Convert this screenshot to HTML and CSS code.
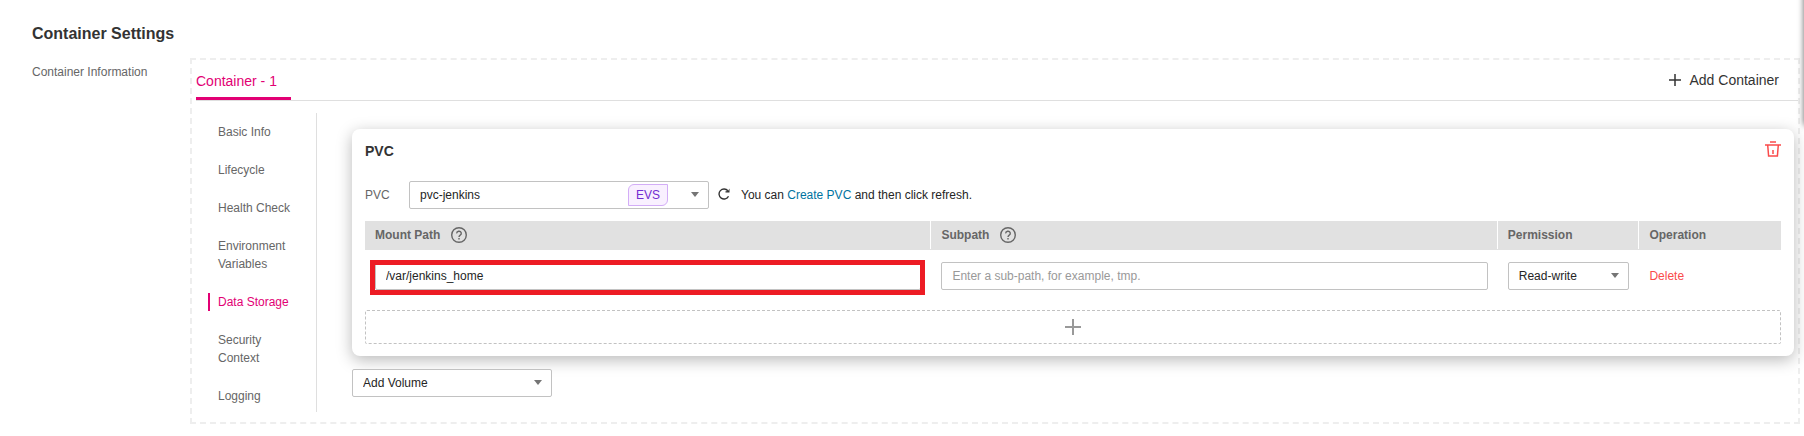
FILE: index.html
```html
<!DOCTYPE html>
<html lang="en">
<head>
<meta charset="utf-8">
<title>Container Settings</title>
<link rel="stylesheet" href="styles.css">
</head>
<body>
<main class="page">
  <h1 class="page-title">Container Settings</h1>
  <div class="section">
    <div class="section-label">Container Information</div>
    <section class="container-box">
      <header class="tabs">
        <button class="tab" type="button">Container - 1</button>
        <button class="add-container" type="button">
          <svg class="icon-plus" viewBox="0 0 12 12" width="12" height="12"><path d="M6 0v12M0 6h12"/></svg>
          Add Container
        </button>
      </header>
      <div class="body">
        <nav class="side-nav">
          <a class="nav-item" href="#basic">Basic Info</a>
          <a class="nav-item" href="#lifecycle">Lifecycle</a>
          <a class="nav-item" href="#health">Health Check</a>
          <a class="nav-item" href="#env">Environment Variables</a>
          <a class="nav-item nav-item-active" href="#storage">Data Storage</a>
          <a class="nav-item" href="#security">Security Context</a>
          <a class="nav-item" href="#logging">Logging</a>
        </nav>
        <div class="content">
          <article class="card">
            <div class="card-head">
              <h2 class="card-title">PVC</h2>
              <button class="trash" type="button" aria-label="Delete volume">
                <svg viewBox="0 0 16 16" width="16" height="16"><path d="M5 1h6M0 4h16"/><path d="M2.700 4l.9 11h8.800l.9-11M8 9v4"/></svg>
              </button>
            </div>
            <div class="pvc-row">
              <label class="pvc-label" for="pvc">PVC</label>
              <div class="select-wrap pvc-select">
                <select class="select" id="pvc"><option>pvc-jenkins</option></select>
                <span class="badge">EVS</span>
                <span class="caret"></span>
              </div>
              <button class="refresh" type="button" aria-label="Refresh">
                <svg viewBox="0 0 12 12" width="12" height="12"><path d="M10.500 8.300A5 5 0 1 1 9.900 2.800"/><path class="solid" d="M11.500 .5v4H7.500V3.300L10 3z"/></svg>
              </button>
              <p class="hint">You can <a class="link" href="#create">Create PVC</a> and then click refresh.</p>
            </div>
            <table class="mounts">
              <thead>
                <tr>
                  <th class="col-wide"><span class="th-inner"><span id="mount-label">Mount Path</span>
                    <svg class="help" viewBox="0 0 16 16" width="16" height="16"><circle cx="8" cy="8" r="7.300"/><path d="M5.700 6.400a2.300 2.100 0 1 1 3.500 1.700C8.300 8.700 8 9 8 10M8 11v1.500"/></svg></span></th>
                  <th class="col-wide"><span class="th-inner"><span id="subpath-label">Subpath</span>
                    <svg class="help" viewBox="0 0 16 16" width="16" height="16"><circle cx="8" cy="8" r="7.300"/><path d="M5.700 6.400a2.300 2.100 0 1 1 3.500 1.700C8.300 8.700 8 9 8 10M8 11v1.500"/></svg></span></th>
                  <th class="col-narrow"><span class="th-inner" id="permission-label">Permission</span></th>
                  <th class="col-narrow"><span class="th-inner">Operation</span></th>
                </tr>
              </thead>
              <tbody>
                <tr>
                  <td><div class="marked"><input class="input" type="text" value="/var/jenkins_home" aria-labelledby="mount-label"></div></td>
                  <td><input class="input" type="text" placeholder="Enter a sub-path, for example, tmp." aria-labelledby="subpath-label"></td>
                  <td><div class="select-wrap"><select class="select" aria-labelledby="permission-label"><option>Read-write</option></select><span class="caret"></span></div></td>
                  <td><button class="delete" type="button">Delete</button></td>
                </tr>
              </tbody>
            </table>
            <button class="add-row" type="button" aria-label="Add mount path">
              <svg viewBox="0 0 16 16" width="16" height="16"><path d="M8 0v16M0 8h16"/></svg>
            </button>
          </article>
          <div class="select-wrap add-volume">
            <select class="select" aria-label="Add Volume"><option>Add Volume</option></select>
            <span class="caret"></span>
          </div>
        </div>
      </div>
    </section>
  </div>
  <div class="edge-clip"><div class="edge-panel"></div></div>
</main>
</body>
</html>
```
FILE: styles.css
```css
* { box-sizing: border-box; }
body {
  margin: 0;
  background: #fff;
  color: #252525;
  font: 12px/18px "Liberation Sans", Arial, sans-serif;
}
button, input, select { font: inherit; color: inherit; margin: 0; }
button { border: 0; padding: 0; background: none; cursor: pointer; }
a { text-decoration: none; }
svg { display: block; fill: none; stroke: currentColor; }

.page { position: relative; padding: 23px 4px 12px 32px; }
.page-title { margin: 0 0 13px; font-size: 16px; line-height: 22px; font-weight: 700; color: #333; }
.section { display: flex; }
.section-label { flex: 0 0 158px; padding-top: 5px; color: #666; }
.container-box { flex: 1; min-width: 0; border: 2px dashed #eee; padding: 0 0 10px 4px; }

.tabs {
  display: flex;
  justify-content: space-between;
  height: 41px;
  border-bottom: 1px solid #dfdfdf;
}
.tab {
  height: 40px;
  padding: 4px 14px 0 0;
  border-bottom: 3px solid #e20074;
  color: #e20074;
  font-size: 14px;
}
.add-container { display: flex; align-items: center; gap: 8px; padding-right: 19px; color: #333; font-size: 14px; }
.icon-plus { stroke-width: 1.5; }

.body { display: flex; padding-top: 12px; }
.side-nav {
  display: flex;
  flex-direction: column;
  gap: 20px;
  flex: 0 0 121px;
  padding: 10px 16px 7px 12px;
  border-right: 1px solid #dfdfdf;
}
.nav-item { padding-left: 8px; border-left: 2px solid transparent; color: #666; }
.nav-item-active { border-color: #e20074; color: #e20074; }

.content { flex: 1; min-width: 0; padding: 16px 4px 0 35px; }
.card {
  padding: 12px 13px;
  border-radius: 8px;
  background: #fff;
  box-shadow: 0 4px 16px rgba(0, 0, 0, .28);
}
.card-head { display: flex; justify-content: space-between; }
.card-title { margin: 0; font-size: 14px; line-height: 20px; color: #333; }
.trash { height: 16px; color: #fa4b4b; }
.trash svg { stroke-width: 1.5; }
.pvc-row { display: flex; align-items: center; margin-top: 20px; }
.pvc-label { width: 44px; color: #666; }
.select-wrap { position: relative; }
.pvc-select { width: 300px; }
.select, .input {
  display: block;
  width: 100%;
  height: 28px;
  padding: 0 10px;
  border: 1px solid #c2c2c2;
  border-radius: 2px;
  background: #fff;
  appearance: none;
  outline: 0;
}
.input::placeholder { color: #999; opacity: 1; }
.caret {
  position: absolute;
  top: 11px;
  right: 10px;
  border: 4px solid transparent;
  border-top: 5px solid #757575;
  border-bottom: 0;
  pointer-events: none;
}
.badge {
  position: absolute;
  top: 3px;
  right: 41px;
  padding: 1px 7px;
  border: 1px solid #d3adf7;
  border-radius: 6px 0;
  background: #f9f0ff;
  color: #722ed1;
  line-height: 18px;
}
.refresh { margin: 0 11px 2px 9px; color: #333; }
.refresh svg { stroke-width: 1.4; }
.refresh .solid { fill: currentColor; stroke: none; }
.hint { margin: 0; }
.link { color: #00739f; }

.mounts { width: 100%; margin-top: 12px; border-collapse: collapse; table-layout: fixed; }
.mounts th { padding: 0; background: #e1e1e1; color: #666; text-align: left; }
.col-wide { width: 40%; }
.col-narrow { width: 10%; }
.th-inner { display: flex; align-items: center; gap: 11px; height: 28px; margin-bottom: 1px; padding-left: 10px; }
.th-inner .help { stroke-width: 1.4; }
.mounts th:not(:last-child) .th-inner { border-right: 1px solid #fff; }
.mounts td { padding: 12px 10px 20px; }
.marked { position: relative; }
.marked::after {
  content: "";
  position: absolute;
  inset: -2px -4px -5px -5px;
  border: 5px solid #ed1c24;
  pointer-events: none;
}
.delete { display: block; color: #fa4b4b; }
.add-row {
  display: flex;
  align-items: center;
  justify-content: center;
  width: 100%;
  height: 34px;
  border: 1px dashed #c2c2c2;
  border-radius: 2px;
  color: #999;
}
.add-row svg { stroke-width: 2; }
.add-volume { width: 200px; margin-top: 13px; }

/* Neighbouring panel that casts its shadow in from the right edge */
.edge-clip { position: absolute; top: 0; right: 0; width: 16px; height: 150px; overflow: hidden; pointer-events: none; }
.edge-panel { position: absolute; top: -10px; left: 16px; width: 20px; height: 135px; box-shadow: 0 0 6px rgba(0, 0, 0, .6); }
```
